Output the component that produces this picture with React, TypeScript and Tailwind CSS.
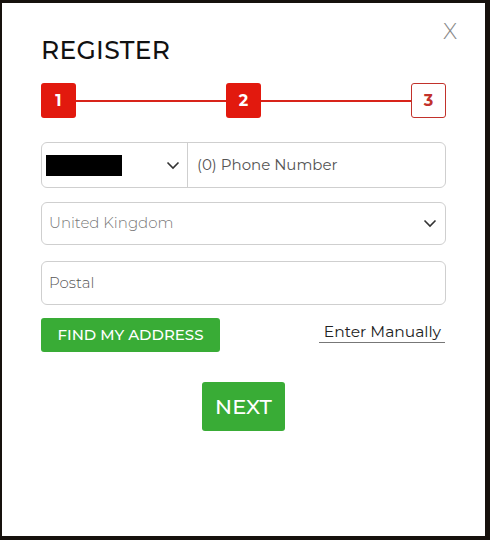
import React from "react";

const Chevron = ({ className = "" }: { className?: string }) => (
  <svg width="14" height="9" viewBox="0 0 14 9" className={className}>
    <path d="M1.5 1.5 L7 7 L12.5 1.5" fill="none" stroke="#333" strokeWidth="1.6" />
  </svg>
);

export default function App() {
  const font = { fontFamily: "Montserrat, 'Open Sans', 'Liberation Sans', sans-serif" };
  return (
    <div className="w-[490px] h-[540px] bg-[#16110d] pl-[2px] pt-[3px]" style={font}>
      <div className="relative w-[483px] h-[533px] bg-white px-[39px] pt-[33px]">
        <div className="absolute left-[441px] top-[18px] text-[22px] font-light text-[#8a8a8a] leading-none">X</div>
        <h1 className="text-[25px] font-medium text-[#111] leading-[28px] tracking-[0.3px]">REGISTER</h1>
        <div className="mt-[19px] flex items-center w-[405px]">
          <div className="w-[35px] h-[35px] rounded-[3px] bg-[#e2190e] text-white text-[16px] font-bold flex items-center justify-center">1</div>
          <div className="flex-1 h-[2px] bg-[#d8241a]" />
          <div className="w-[35px] h-[35px] rounded-[3px] bg-[#e2190e] text-white text-[16px] font-bold flex items-center justify-center">2</div>
          <div className="flex-1 h-[2px] bg-[#d8241a]" />
          <div className="w-[35px] h-[35px] rounded-[3px] border border-[#c2322b] bg-white text-[#c2322b] text-[16px] font-bold flex items-center justify-center">3</div>
        </div>
        <div className="mt-[24px] w-[405px] h-[46px] border border-[#cfcfcf] rounded-[6px] flex">
          <div className="w-[146px] flex items-center pl-[4px] pr-[7px] border-r border-[#cfcfcf]">
            <div className="w-[76px] h-[21px] bg-black" />
            <div className="flex-1" />
            <Chevron />
          </div>
          <div className="flex items-center pl-[9px] text-[15px] text-[#555]">(0) Phone Number</div>
        </div>
        <div className="mt-[14px] w-[405px] h-[43px] border border-[#cfcfcf] rounded-[6px] flex items-center pl-[7px] pr-[8px] justify-between">
          <span className="text-[15px] font-light text-[#777]">United Kingdom</span>
          <Chevron />
        </div>
        <div className="mt-[16px] w-[405px] h-[44px] border border-[#cfcfcf] rounded-[6px] flex items-center pl-[7px]">
          <span className="text-[15px] font-light text-[#555]">Postal</span>
        </div>
        <div className="mt-[13px] w-[405px] flex items-start justify-between">
          <div className="w-[179px] h-[34px] rounded-[3px] bg-[#39ac36] text-white text-[15px] font-medium flex items-center justify-center">FIND MY ADDRESS</div>
          <div className="mt-[5px] mr-[1px] border-b border-[#777] pl-[5px] pr-[4px] pb-[1px] text-[15.5px] text-[#222] leading-[18px]">Enter Manually</div>
        </div>
        <div className="mt-[30px] flex justify-center w-[405px]">
          <div className="w-[83px] h-[49px] rounded-[3px] bg-[#39ac36] text-white text-[21px] font-medium flex items-center justify-center">NEXT</div>
        </div>
      </div>
    </div>
  );
}
